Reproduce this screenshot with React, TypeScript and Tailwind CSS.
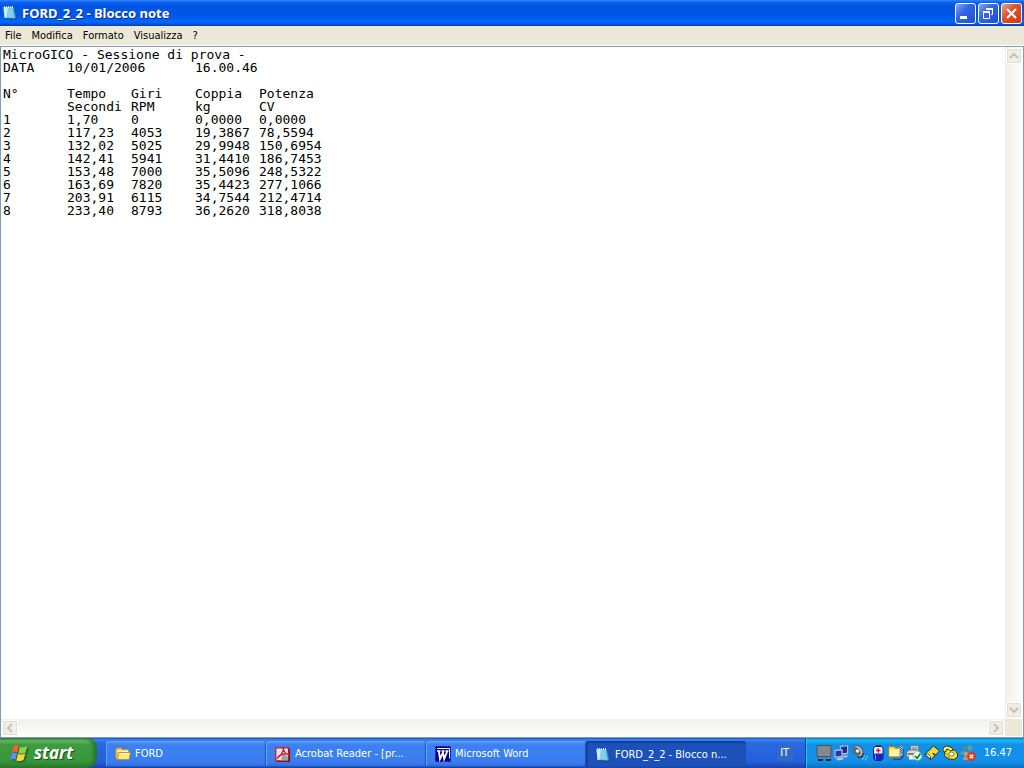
import type { ReactNode } from "react";

const rows = [
  ["MicroGICO - Sessione di prova -"],
  ["DATA", "10/01/2006", "16.00.46"],
  [],
  ["N°", "Tempo", "Giri", "Coppia", "Potenza"],
  ["", "Secondi", "RPM", "kg", "CV"],
  ["1", "1,70", "0", "0,0000", "0,0000"],
  ["2", "117,23", "4053", "19,3867", "78,5594"],
  ["3", "132,02", "5025", "29,9948", "150,6954"],
  ["4", "142,41", "5941", "31,4410", "186,7453"],
  ["5", "153,48", "7000", "35,5096", "248,5322"],
  ["6", "163,69", "7820", "35,4423", "277,1066"],
  ["7", "203,91", "6115", "34,7544", "212,4714"],
  ["8", "233,40", "8793", "36,2620", "318,8038"],
];

const documentText = rows.map((cells) => cells.join("\t")).join("\n");

function Icon({ children }: { children: ReactNode }) {
  return (
    <svg viewBox="0 0 16 16" className="size-4 shrink-0" aria-hidden="true">
      {children}
    </svg>
  );
}

function NotepadIcon() {
  return (
    <Icon>
      <path d="M3 13 10 14.500 14.500 14 15 12 12 4Z" fill="#123f6e" />
      <path d="M10.500 3h1.500l2.500 9.500-2 1.500Z" fill="#2f86b8" />
      <path d="M1.500 2h9.500l2 11.500-10.500-.5Z" fill="#6cc3e8" />
      <path d="M1.500 2.500H6L4.500 12.800l-2-.1Z" fill="#c9effb" />
      <path d="M5.500 5h4.800M5.500 7h5.200M5.200 9h5.800M5 11h6.300" stroke="#9fdcf2" strokeWidth=".9" />
      <path d="M2.500 1.200v2M4.500 1.200v2M6.500 1.200v2M8.500 1.200v2M10.500 1.200v2" stroke="#eef8fb" strokeWidth="1" />
    </Icon>
  );
}

function FolderIcon() {
  return (
    <Icon>
      <path d="M.8 3.500 2 2h4l1.500 1.500H13L14 5v8.500H2L.8 12Z" fill="#f2c84b" stroke="#c48f19" strokeWidth=".8" />
      <path d="M2 4.500h11V6H2Z" fill="#fff6bd" />
      <path d="M4 6.500h11.500L14 13.500H2Z" fill="#ffe98c" stroke="#b9851b" strokeWidth=".8" />
      <path d="M4.500 7.500h9.800" stroke="#fffbd8" />
    </Icon>
  );
}

function AcrobatIcon() {
  return (
    <Icon>
      <path d="M2 3h13v13H2Z" fill="#4a1518" />
      <path d="M.8 1.800h12.700v13H.8Z" fill="#e3e6e8" stroke="#c31722" strokeWidth="1.200" />
      <path d="M8 7 13 11v3.300H6Z" fill="#9da3a3" />
      <path d="M8 .5c1.200 3-1 8.500-5.500 11.500C4 8.500 10 7 15 8.500 12 9.500 8 6 8 .5Z" fill="none" stroke="#df1320" strokeWidth="1.300" />
    </Icon>
  );
}

function WordIcon() {
  return (
    <Icon>
      <path d="M0 0h16v16H0Z" fill="#000080" />
      <path d="M0 .5h16M0 15.500h16M.5 0v16M15.500 0v16" stroke="#1d45ff" strokeDasharray="1 1" />
      <path d="M2 2.500h12.500v10" fill="none" stroke="#fff" />
      <path d="M2 5h3.500M6.500 5h3M10.500 5h3" stroke="#fff" strokeWidth="1.400" />
      <path d="M3.800 5 5 13 8 6.500 9.200 13 12.300 5" stroke="#fff" strokeWidth="1.800" fill="none" />
    </Icon>
  );
}

function WindowsFlag() {
  return (
    <svg viewBox="0 0 18 18" className="size-[18px] shrink-0 drop-shadow-[1px_1px_1px_#14501c]" aria-hidden="true">
      <path d="M3.500 2C5.500.5 7.500.8 9 1.700L7.500 8.500C5.500 7.500 4 7.500 2 8.700Z" fill="#f3622f" />
      <path d="M9.800 2.400c2 1.200 4.500 1.200 7.500-.3L15.500 8.700c-2.300 1.300-4.800 1.300-7.200.2Z" fill="#86d64a" />
      <path d="M1.700 9.400c2-1.200 3.700-1.200 5.500-.3L5.500 15.700c-1.800-.9-3.500-.8-5.300.3Z" fill="#5b90fa" />
      <path d="M8.100 9.700c2.200 1.100 4.700 1 7.200-.3L13.500 16c-2.500 1.500-5 1.400-7.200.2Z" fill="#ffd738" />
    </svg>
  );
}

function TrayIcons() {
  return (
    <div className="flex shrink-0 gap-0.5">
      <Icon>
        <path d="M1 .5h14v11H1Z" fill="#85878c" stroke="#4c545c" />
        <path d="M2 13h5v3H2ZM10 13h5v3h-5Z" fill="#202832" />
        <path d="M2.500 13.500h4M10.500 13.500h4" stroke="#879098" />
      </Icon>
      <Icon>
        <path d="m6 1 8-1v9l-8 1Z" fill="#c6cee8" stroke="#8792b8" strokeWidth=".6" />
        <path d="m7 2 6-.8v6.500l-6 .8Z" fill="#1b2a9c" />
        <path d="m8 11 5-.7 1 1.700-5 .8Z" fill="#b9c0dc" />
        <path d="m.5 5 8-.8V12l-8 .8Z" fill="#d3d9ee" stroke="#8792b8" strokeWidth=".6" />
        <path d="m1.500 6 6-.6v5.500l-6 .6Z" fill="#26399f" />
        <path d="m2 13.500 6-1 2 1.700-6 1.200Z" fill="#c4c8d8" />
      </Icon>
      <Icon>
        <ellipse cx="6" cy="6" rx="4.500" ry="6" fill="#c3c7c9" stroke="#50575c" transform="rotate(-35 6 6)" />
        <ellipse cx="5" cy="6.300" rx="3" ry="4.600" fill="#5e6569" transform="rotate(-35 5 6.300)" />
        <circle cx="5.500" cy="6" r="1.800" fill="#e8ebec" />
        <path d="M6 12.500 10 12l1.500-4" stroke="#3c4348" strokeWidth="1.500" fill="none" />
        <path d="m10 15 3-4.500M13 15.500l2.500-4.500" stroke="#8fc8ff" fill="none" />
      </Icon>
      <Icon>
        <path d="M6 0h5v2H6Z" fill="#3b4254" />
        <path d="M3.500 3.500 5 1.500h6.500l1.500 2v10L11.500 15.500H5l-1.500-2Z" fill="#f4f4fa" stroke="#15186e" />
        <path d="M3.500 8.500H13v5L11.500 15.500H5l-1.500-2Z" fill="#1826c4" />
        <path d="M6 5.500h4.500M8.300 3.300v4.500" stroke="#e2142c" strokeWidth="1.500" />
        <path d="M5.500 9.500v5" stroke="#7f9cff" />
      </Icon>
      <Icon>
        <path d="M5 14.500h6q4-1 4-5V4" fill="none" stroke="#174da0" strokeWidth="1.500" />
        <path d="M.7 1.500H6L7.500 3H12v9H.7Z" fill="#ffd84e" stroke="#ad7c17" />
        <path d="M1.500 4.500h10v6.500h-10Z" fill="#fff3ab" />
        <path d="M11.500 1.500h3v9h-3Z" fill="#b9c3cc" />
        <path d="M12 2h1v1h-1ZM13 3h1v1h-1ZM12 4h1v1h-1ZM13 5h1v1h-1ZM12 6h1v1h-1ZM13 7h1v1h-1ZM12 8h1v1h-1Z" fill="#3d5670" />
      </Icon>
      <Icon>
        <path d="M4.500.8h8v7h-8Z" fill="#e3e5e4" stroke="#6e7374" strokeWidth=".8" />
        <path d="M5.500 2h6v4h-6Z" fill="#97a6b7" />
        <path d="m.5 7 3-2h8l3 3v5H4L.5 11Z" fill="#dddcd3" stroke="#686b65" strokeWidth=".8" />
        <path d="M1.500 8h9v1.800h-9Z" fill="#74786f" />
        <path d="M3 11h6v3.500H3Z" fill="#f4f3e9" />
        <circle cx="11.500" cy="11" r="4.400" fill="#f8fff8" stroke="#7da783" strokeWidth=".6" />
        <path d="m9 11 2.200 2.300L14.500 8.500" fill="none" stroke="#07932c" strokeWidth="1.900" />
      </Icon>
      <Icon>
        <path d="m.8 9.500 8.700-8.500 6 5L7 14.500Z" fill="#ffe947" stroke="#0e1212" strokeWidth=".9" />
        <path d="m4 9 6.500-6.500M6 10.500 12 4.300M8 11.500l5.500-5.500" stroke="#8f871c" strokeDasharray="1 1" />
        <path d="m1.500 10 5 4v-2.500L3.500 9Z" fill="#fff" stroke="#101714" strokeWidth=".7" />
        <path d="m9 8.500 2 1.500" stroke="#121a13" strokeWidth="1.500" />
      </Icon>
      <Icon>
        <path d="m3 6 3-2 7.500 1.500L15.500 9v3L12 14.500 7 14l-4.500-3Z" fill="#f9e434" stroke="#292d12" strokeWidth=".9" />
        <path d="M.8 5 1.500 2.500 5 .8l5 2 1 2L8.500 6 5.500 4 4 5v1.500L2 7Z" fill="#fff564" stroke="#23270e" strokeWidth=".9" />
        <ellipse cx="9.500" cy="9" rx="2.600" ry="2" fill="#fff" stroke="#454a22" strokeWidth=".7" />
        <path d="m4.500 9 1.500 1M6 11.500l1.500.7" stroke="#5e6318" />
      </Icon>
      <Icon>
        <circle cx="4.500" cy="3.500" r="2.500" fill="#438ba0" />
        <path d="M.5 7c3-2 6-1 7 2l-1 4-3-3-3-1Z" fill="#48a4ae" />
        <circle cx="10" cy="2.800" r="2.600" fill="#6a96a6" />
        <path d="M7 6c4-2 7 0 6 4l-5 3Z" fill="#5b87ad" />
        <circle cx="6" cy="9" r="2" fill="#d99a62" />
        <path d="M3 14c0-3 5-4 6-1v2H4Z" fill="#e78e43" />
        <circle cx="11.500" cy="11.500" r="4.200" fill="#e93821" stroke="#b8402f" strokeWidth=".6" />
        <path d="m9.800 9.800 3.400 3.400m0-3.400-3.400 3.400" stroke="#fff" strokeWidth="1.500" />
      </Icon>
    </div>
  );
}

function CaptionButton({ label, danger, children }: { label: string; danger?: boolean; children: ReactNode }) {
  const color = danger
    ? "bg-[linear-gradient(135deg,#f0a08a,#e2532c_40%,#c93a12)]"
    : "bg-[linear-gradient(135deg,#86a8f5,#3466e8_40%,#1d4fd8)]";
  return (
    <button aria-label={label} className={`flex size-[21px] items-center justify-center rounded-[3px] border border-white ${color}`}>
      <svg viewBox="0 0 19 19" className="size-[19px]" fill="none" stroke="#fff" aria-hidden="true">
        {children}
      </svg>
    </button>
  );
}

function ScrollButton({ label, path }: { label: string; path: string }) {
  return (
    <button
      aria-label={label}
      className="flex size-4 shrink-0 items-center justify-center rounded-[2px] border border-white bg-[#efede5] shadow-[inset_0_0_0_1px_#e2dfd3]"
    >
      <svg viewBox="0 0 10 10" className="size-2.5" fill="none" stroke="#c5c3b8" strokeWidth="2" aria-hidden="true">
        <path d={path} />
      </svg>
    </button>
  );
}

function TaskButton({ icon, label, active }: { icon: ReactNode; label: string; active?: boolean }) {
  const look = active
    ? "bg-[#1b51b9] pt-0.5 shadow-[inset_1px_1px_2px_#0c3382]"
    : "bg-[linear-gradient(#5b96f7,#3c81f3_16%,#3a7df0_80%,#2f6de0)] shadow-[inset_1px_1px_0_#69a0f7,inset_-1px_-1px_1px_#2355bd]";
  return (
    <button
      aria-pressed={active}
      className={`flex h-[26px] w-40 min-w-0 items-center gap-1 rounded-[3px] pl-[9px] text-left text-white ${look}`}
    >
      {icon}
      <span className="truncate">{label}</span>
    </button>
  );
}

export default function App() {
  return (
    <div className="flex h-screen flex-col overflow-hidden bg-[#ece9d8] font-['DejaVu_Sans_Condensed','Noto_Sans',sans-serif] text-[11px] leading-4 text-black">
      <header className="flex h-[26px] shrink-0 items-center gap-1 bg-[linear-gradient(#2a86fb_0,#0d60ee_10%,#0054e1_25%,#0056e8_60%,#0068fc_85%,#0050d8_94%,#0039b0)] pl-0.5">
        <NotepadIcon />
        <h1 className="min-w-0 flex-1 truncate font-['Noto_Sans',sans-serif] text-[13px] font-bold text-white [text-shadow:1px_1px_#0f2d82]">
          FORD_2_2 - Blocco note
        </h1>
        <div className="flex gap-0.5 pr-0.5">
          <CaptionButton label="Riduci a icona">
            <path d="M4 13.500h7" strokeWidth="3" />
          </CaptionButton>
          <CaptionButton label="Ripristina">
            <path d="M4.500 8v6.500h6V8M7.500 5v-.5h6v6H12" strokeWidth="1" />
            <path d="M4 8h7M7 5h7" strokeWidth="2" />
          </CaptionButton>
          <CaptionButton label="Chiudi" danger>
            <path d="m5 5 9 9m0-9-9 9" strokeWidth="2.200" />
          </CaptionButton>
        </div>
      </header>

      <nav aria-label="Menu" className="flex h-5 shrink-0 items-center gap-2.5 border-b border-white pl-[5px]">
        <button>File</button>
        <button>Modifica</button>
        <button>Formato</button>
        <button>Visualizza</button>
        <button>?</button>
      </nav>

      <main className="grid min-h-0 flex-1 grid-cols-[1fr_17px] grid-rows-[1fr_17px] border border-[#7f9db9] bg-white pr-px pb-px">
        <textarea
          aria-label="Testo del documento"
          wrap="off"
          spellCheck={false}
          defaultValue={documentText}
          className="resize-none overflow-hidden bg-white px-0.5 pt-px font-['DejaVu_Sans_Mono','Liberation_Mono',monospace] text-[13px] leading-[13px] outline-none [tab-size:64px]"
        />
        <div className="flex flex-col items-center justify-between bg-[linear-gradient(90deg,#f0efe9,#fefefb)] py-px">
          <ScrollButton label="Scorri in alto" path="m1 7 4-4 4 4" />
          <ScrollButton label="Scorri in basso" path="m1 3 4 4 4-4" />
        </div>
        <div className="flex items-center justify-between bg-[linear-gradient(#f0efe9,#fefefb)] px-px">
          <ScrollButton label="Scorri a sinistra" path="m7 1-4 4 4 4" />
          <ScrollButton label="Scorri a destra" path="m3 1 4 4-4 4" />
        </div>
        <div className="bg-[#ece9d8]" />
      </main>

      <footer className="flex h-[30px] shrink-0 bg-[linear-gradient(#1f4fb8_0,#3b86f2_6%,#2a68e0_16%,#245edb_80%,#1941a5)]">
        <button className="flex w-[97px] shrink-0 items-center gap-1.5 rounded-r-[10px] bg-[linear-gradient(#2f7c31_0,#6fb871_8%,#3f9b41_22%,#38983a_75%,#2a7a2c)] pl-2.5 font-['Open_Sans','Noto_Sans',sans-serif] text-[17px] leading-6 font-bold text-white italic shadow-[inset_-3px_0_4px_#24702a] [text-shadow:1px_1px_1px_#1c4a20]">
          <WindowsFlag />
          start
        </button>
        <div className="flex min-w-0 flex-1 items-center pt-0.5 pl-[9px]">
          <TaskButton icon={<FolderIcon />} label="FORD" />
          <TaskButton icon={<AcrobatIcon />} label="Acrobat Reader - [pr..." />
          <TaskButton icon={<WordIcon />} label="Microsoft Word" />
          <TaskButton icon={<NotepadIcon />} label="FORD_2_2 - Blocco n..." active />
        </div>
        <button aria-label="Lingua: IT" className="mx-3 size-4 shrink-0 self-center bg-[#316ac5] text-center text-white">
          IT
        </button>
        <div className="flex shrink-0 items-center gap-2 border-l border-[#0a3b96] bg-[linear-gradient(#0c79cc_0,#19b9f3_8%,#1290e8_22%,#128fe9_80%,#0d6fc0)] pr-3 pl-2.5 text-white shadow-[inset_1px_0_#1fc8f5]">
          <TrayIcons />
          <time>16.47</time>
        </div>
      </footer>
    </div>
  );
}
